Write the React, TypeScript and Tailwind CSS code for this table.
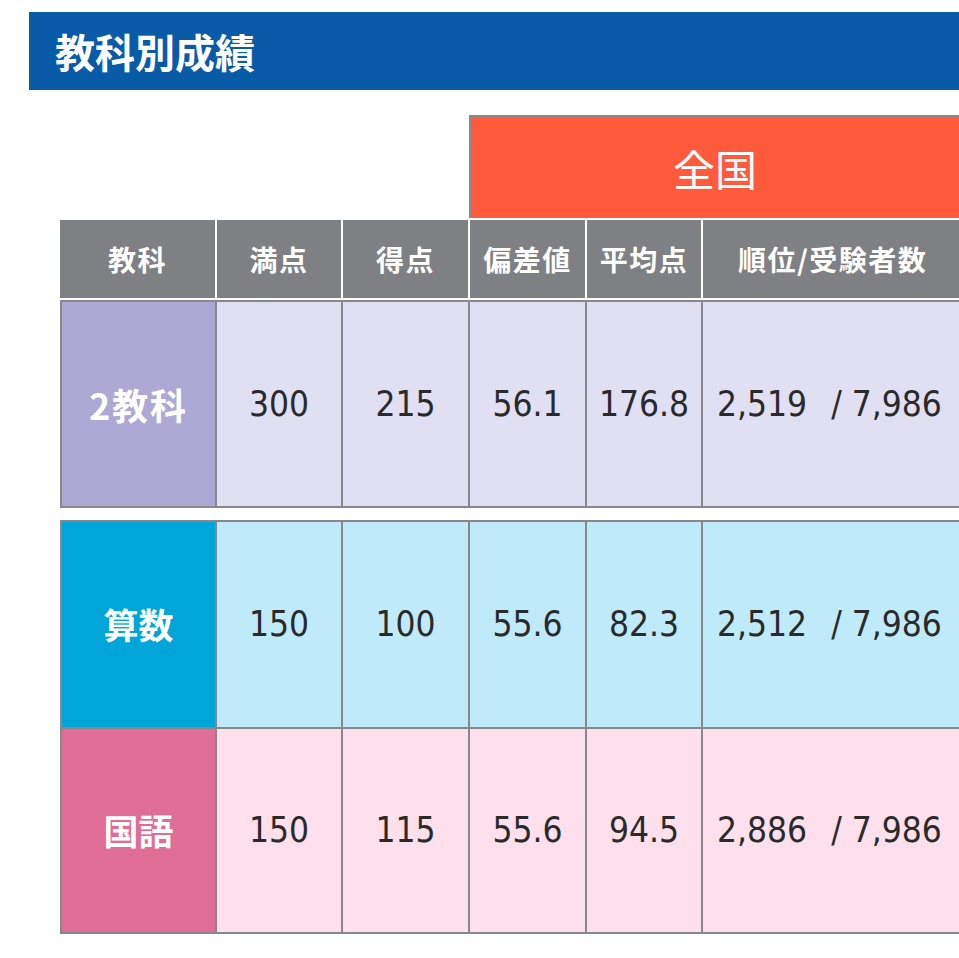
import React from "react";

const jp = "font-['Noto_Sans_CJK_JP',sans-serif]";
const num = "font-['DejaVu_Sans',sans-serif] font-stretch-condensed";

const headers = ["教科", "満点", "得点", "偏差値", "平均点", "順位/受験者数"];

interface Row {
  label: string;
  full: string;
  score: string;
  dev: string;
  avg: string;
  rank: string;
  total: string;
  labelBg: string;
  cellBg: string;
  h: string;
}

const total: Row = {
  label: "2教科",
  full: "300",
  score: "215",
  dev: "56.1",
  avg: "176.8",
  rank: "2,519",
  total: "/ 7,986",
  labelBg: "bg-[#aea9d4]",
  cellBg: "bg-[#e1dff2]",
  h: "h-[204px]",
};

const subjects: Row[] = [
  {
    label: "算数",
    full: "150",
    score: "100",
    dev: "55.6",
    avg: "82.3",
    rank: "2,512",
    total: "/ 7,986",
    labelBg: "bg-[#00a5d9]",
    cellBg: "bg-[#bfeafa]",
    h: "h-[205px]",
  },
  {
    label: "国語",
    full: "150",
    score: "115",
    dev: "55.6",
    avg: "94.5",
    rank: "2,886",
    total: "/ 7,986",
    labelBg: "bg-[#e06d95]",
    cellBg: "bg-[#fde0ec]",
    h: "h-[203px]",
  },
];

const cols = "grid grid-cols-[153px_124px_125px_115px_114px_1fr] gap-x-[2px]";

function DataRow({ row }: { row: Row }) {
  const cell = `${row.cellBg} flex items-center justify-center text-[35px] text-[#2a2a2a] ${num}`;
  return (
    <div className={`${cols} ${row.h} bg-[#88888a]`}>
      <div
        className={`${row.labelBg} flex items-center justify-center text-white text-[35px] font-bold ${jp} ${
          row.label === "2教科" ? "tracking-[2px] text-[36px]" : ""
        }`}
      >
        {row.label}
      </div>
      <div className={cell}>{row.full}</div>
      <div className={cell}>{row.score}</div>
      <div className={cell}>{row.dev}</div>
      <div className={cell}>{row.avg}</div>
      <div className={`${row.cellBg} flex items-center pl-[14px] text-[35px] text-[#2a2a2a] ${num}`}>
        <span>{row.rank}</span>
        <span className="ml-[24px]">{row.total}</span>
      </div>
    </div>
  );
}

export default function App() {
  return (
    <div className="w-[959px] h-[958px] overflow-hidden bg-white">
      {/* 見出し */}
      <div className="ml-[29px] mt-[12px] w-[1000px] h-[78px] bg-[#0a5ba7] flex items-center pl-[26px]">
        <h1 className={`text-white text-[40px] font-bold ${jp}`}>教科別成績</h1>
      </div>

      <div className="ml-[60px] mt-[25px] w-[1000px]">
        {/* 全国 */}
        <div className="flex">
          <div className="w-[409px]" />
          <div className="w-[560px] h-[103px] bg-[#ff5a3c] border-t-2 border-l-2 border-[#88888a] flex items-center justify-center pr-[70px]">
            <span className={`text-white text-[42px] font-normal ${jp}`}>全国</span>
          </div>
        </div>

        {/* 項目 */}
        <div className="mt-[2px] grid grid-cols-[155px_124px_125px_115px_114px_1fr] gap-x-[2px] h-[78px] bg-white">
          {headers.map((h) => (
            <div
              key={h}
              className={`bg-[#7f8083] flex items-center text-white text-[28px] tracking-[1.5px] font-bold ${jp} ${
                h === "順位/受験者数" ? "justify-start pl-[35px]" : "justify-center"
              }`}
            >
              {h}
            </div>
          ))}
        </div>

        {/* 2教科 */}
        <div className="mt-[2px] border-2 border-[#88888a]">
          <DataRow row={total} />
        </div>

        {/* 科目 */}
        <div className="mt-[12px] border-2 border-[#88888a] flex flex-col gap-y-[2px] bg-[#88888a]">
          {subjects.map((s) => (
            <DataRow key={s.label} row={s} />
          ))}
        </div>
      </div>
    </div>
  );
}
